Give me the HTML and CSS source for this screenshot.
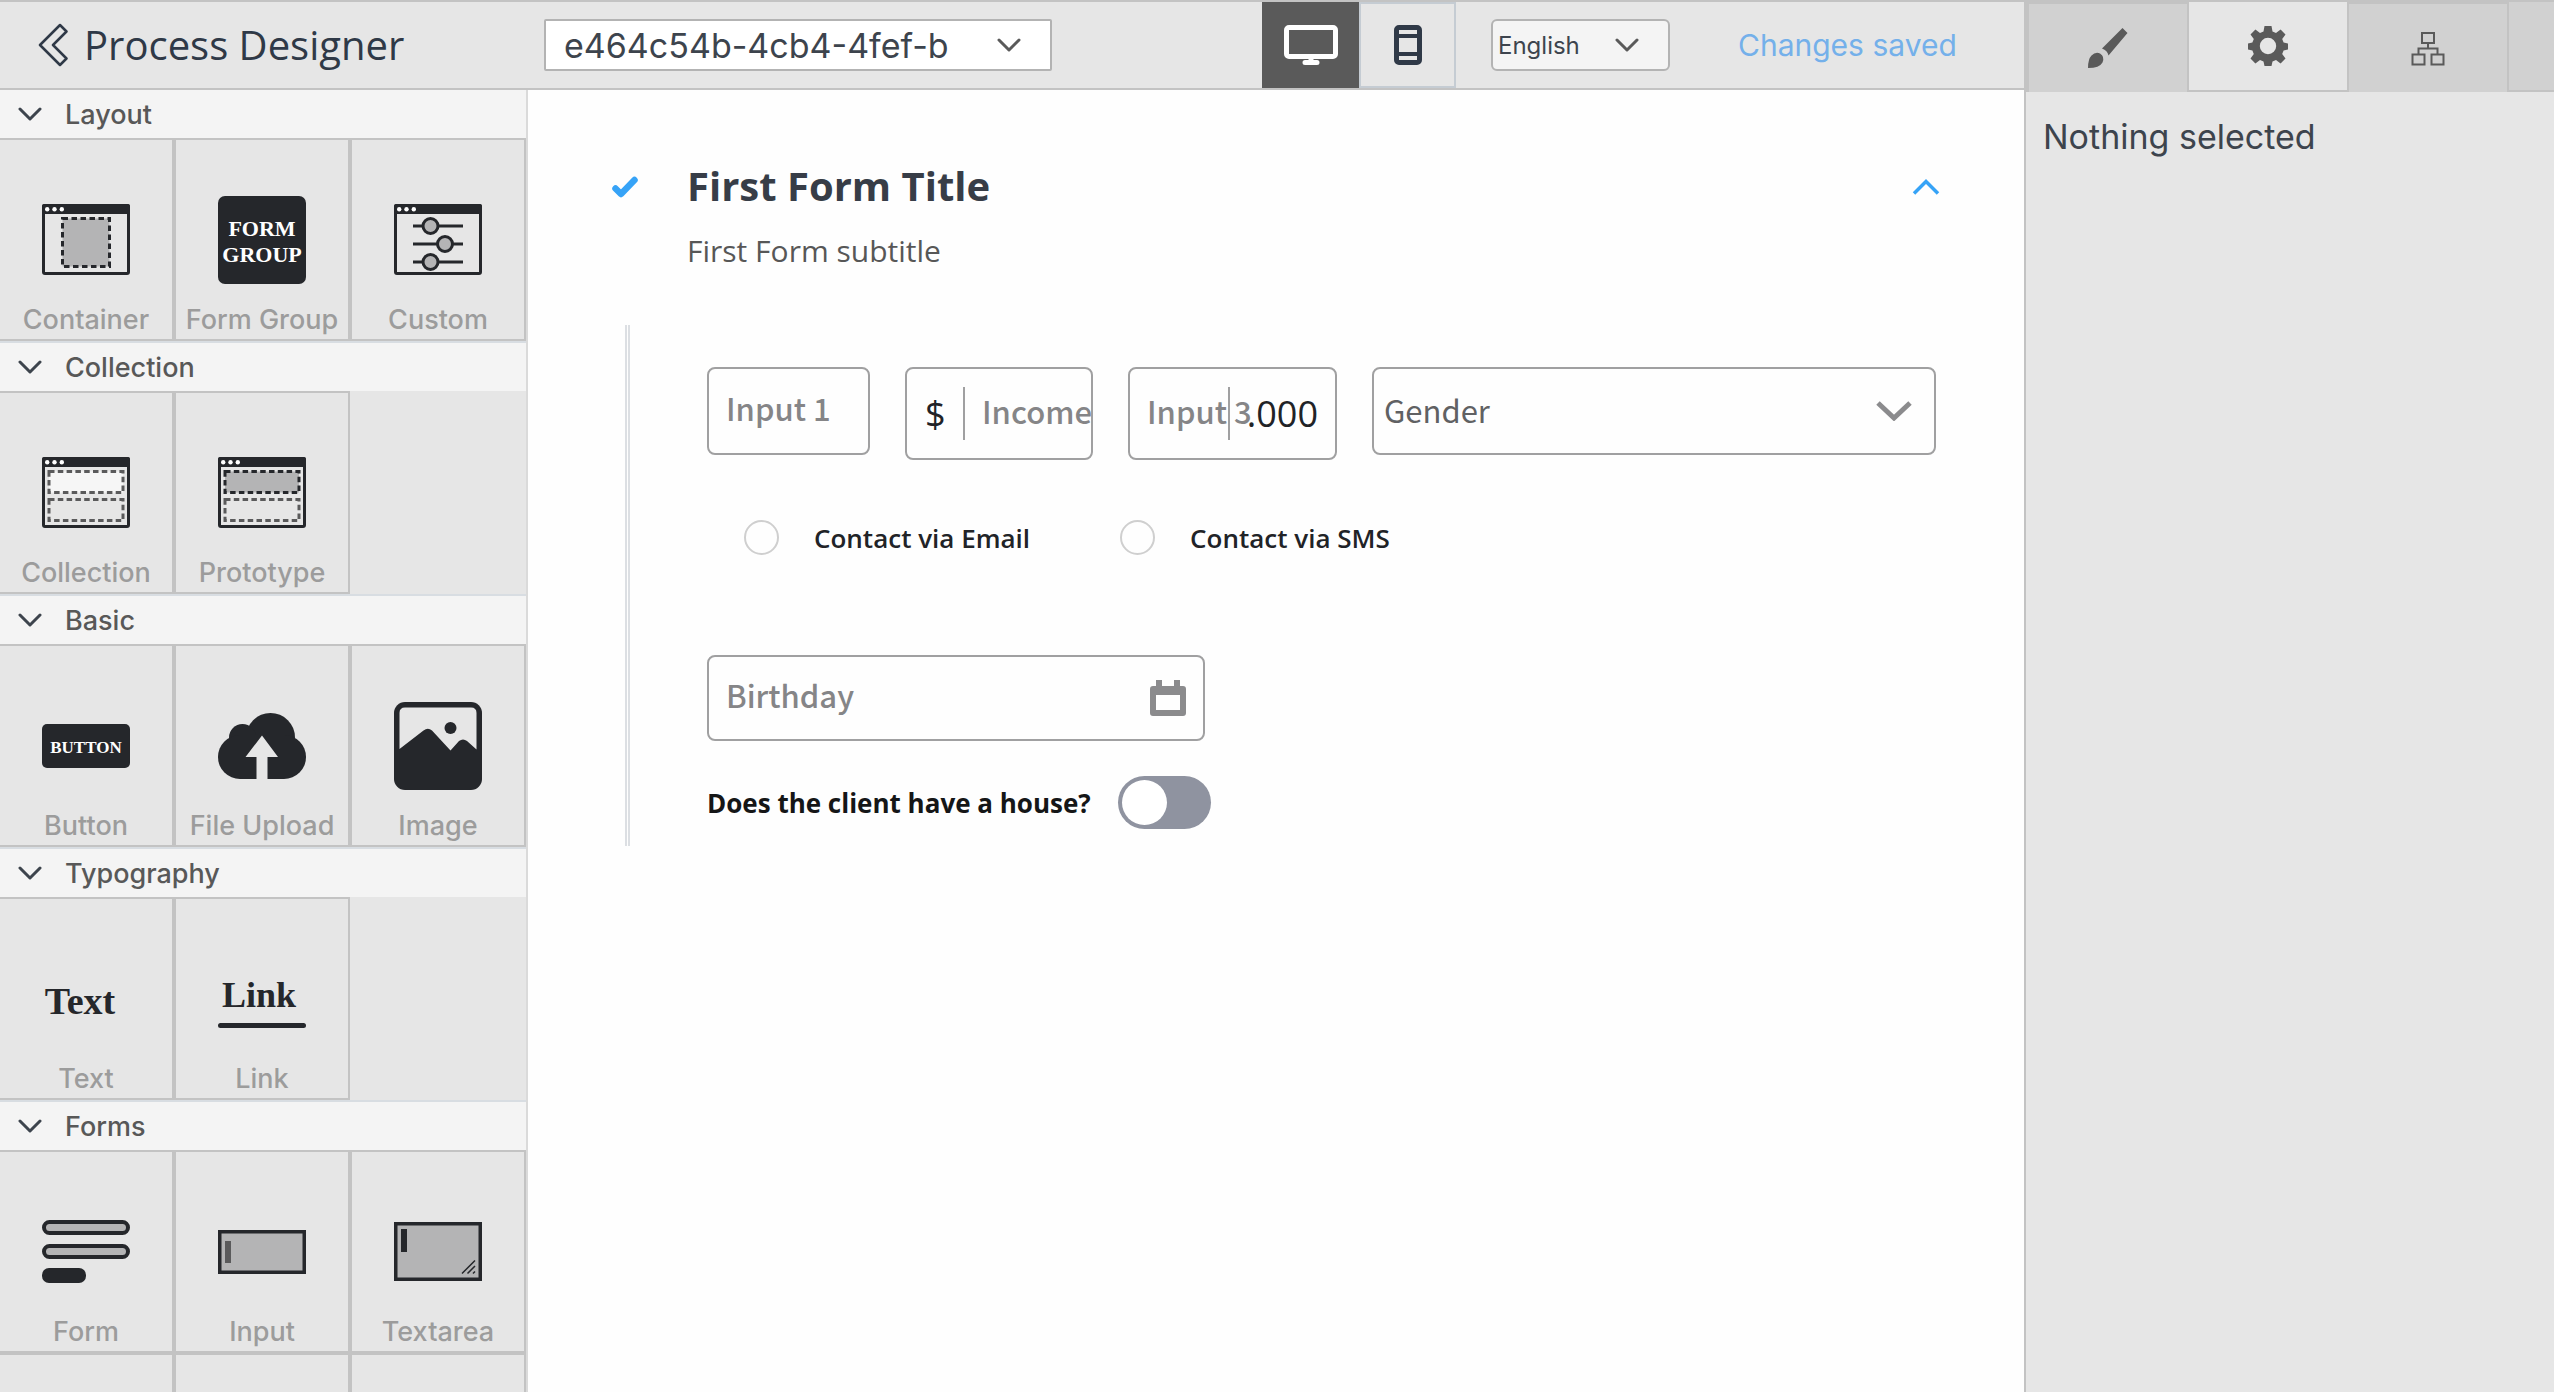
FILE: index.html
```html
<!DOCTYPE html>
<html lang="en">
<head>
<meta charset="utf-8">
<title>Process Designer</title>
<link rel="stylesheet" href="styles.css">
</head>
<body>
<svg class="sprite" aria-hidden="true">
  <symbol id="chevron" viewBox="0 0 24 14"><path d="M2 2l10 10L22 2" fill="none" stroke="currentColor" stroke-width="3" stroke-linecap="round" stroke-linejoin="round"/></symbol>
  <symbol id="window" viewBox="0 0 88 88">
    <rect x="1.5" y="9.5" width="85" height="68" rx="1.5" fill="none" stroke="#25272b" stroke-width="3"/>
    <path d="M0 18V10q0-2 2-2h84q2 0 2 2v8z" fill="#25272b"/>
    <g fill="#fff"><circle cx="5.2" cy="13.2" r="2.2"/><circle cx="12.5" cy="13.2" r="2.2"/><circle cx="19.8" cy="13.2" r="2.2"/></g>
  </symbol>
</svg>
<div class="app">
  <header class="topbar">
    <a class="brand" href="#">
      <svg class="brand-icon" viewBox="0 0 30 44"><path d="M2 22L22 2l6.500 6.500L15 22l13.500 13.500L22 42z" fill="none" stroke="currentColor" stroke-width="2.500" stroke-linejoin="round"/></svg>
      <h1 class="brand-name">Process Designer</h1>
    </a>
    <div class="picker picker-process">
      <select class="picker-select" aria-label="Process"><option>e464c54b-4cb4-4fef-b</option></select>
      <svg class="picker-icon"><use href="#chevron"/></svg>
    </div>
    <div class="devices">
      <button class="device device-active" type="button" aria-label="Desktop">
        <svg class="device-icon device-icon-wide" viewBox="0 0 54 40"><rect x="2.500" y="2.500" width="49" height="29" rx="2.500" fill="none" stroke="currentColor" stroke-width="5"/><path d="M27 33v4M21 37.500h12" fill="none" stroke="currentColor" stroke-width="5" stroke-linecap="round"/></svg>
      </button>
      <button class="device" type="button" aria-label="Mobile">
        <svg class="device-icon" viewBox="0 0 28 40"><rect x="2.500" y="2.500" width="23" height="35" rx="2.500" fill="none" stroke="currentColor" stroke-width="5"/><path d="M3 11h22M3 29h22" stroke="currentColor" stroke-width="4"/></svg>
      </button>
    </div>
    <div class="picker picker-language">
      <select class="picker-select" aria-label="Language"><option>English</option></select>
      <svg class="picker-icon"><use href="#chevron"/></svg>
    </div>
    <p class="status">Changes saved</p>
  </header>

  <nav class="palette" aria-label="Components">
    <section class="group">
      <button class="group-head" type="button"><svg class="group-icon"><use href="#chevron"/></svg>Layout</button>
      <div class="tiles">
        <button class="tile" type="button">
          <svg class="tile-icon" viewBox="0 0 88 88"><use href="#window"/><rect x="20.500" y="22.500" width="47" height="48" fill="#b4b4b5" stroke="#25272b" stroke-width="3" stroke-dasharray="5.500 3.500"/></svg>
          <span class="tile-label">Container</span>
        </button>
        <button class="tile" type="button">
          <svg class="tile-icon" viewBox="0 0 88 88"><rect width="88" height="88" rx="7" fill="#25272b"/><text class="glyph glyph-light" x="44" y="40" font-size="22">FORM</text><text class="glyph glyph-light" x="44" y="66" font-size="22">GROUP</text></svg>
          <span class="tile-label">Form Group</span>
        </button>
        <button class="tile" type="button">
          <svg class="tile-icon" viewBox="0 0 88 88"><use href="#window"/><g fill="#b4b4b5" stroke="#25272b" stroke-width="3"><path d="M19 30h50M19 48h50M19 66h50"/><circle cx="36.500" cy="30" r="7.500"/><circle cx="51" cy="48" r="7.500"/><circle cx="36.500" cy="66" r="7.500"/></g></svg>
          <span class="tile-label">Custom</span>
        </button>
      </div>
    </section>

    <section class="group">
      <button class="group-head" type="button"><svg class="group-icon"><use href="#chevron"/></svg>Collection</button>
      <div class="tiles">
        <button class="tile" type="button">
          <svg class="tile-icon" viewBox="0 0 88 88"><use href="#window"/><g stroke="#5a5a5b" stroke-width="3" stroke-dasharray="5.500 3.300"><rect x="7" y="22.500" width="74" height="21" fill="#f6f6f6"/><rect x="7" y="50.500" width="74" height="21" fill="none"/></g></svg>
          <span class="tile-label">Collection</span>
        </button>
        <button class="tile" type="button">
          <svg class="tile-icon" viewBox="0 0 88 88"><use href="#window"/><g stroke-width="3" stroke-dasharray="5.500 3.300"><rect x="7" y="22.500" width="74" height="21" fill="#b4b4b5" stroke="#25272b"/><rect x="7" y="50.500" width="74" height="21" fill="none" stroke="#5a5a5b"/></g></svg>
          <span class="tile-label">Prototype</span>
        </button>
      </div>
    </section>

    <section class="group">
      <button class="group-head" type="button"><svg class="group-icon"><use href="#chevron"/></svg>Basic</button>
      <div class="tiles">
        <button class="tile" type="button">
          <svg class="tile-icon" viewBox="0 0 88 88"><rect y="22" width="88" height="44" rx="5" fill="#25272b"/><text class="glyph glyph-light" x="44" y="51" font-size="17">BUTTON</text></svg>
          <span class="tile-label">Button</span>
        </button>
        <button class="tile" type="button">
          <svg class="tile-icon" viewBox="0 0 88 88"><g fill="#25272b"><circle cx="52.500" cy="35.500" r="24.500"/><circle cx="24.500" cy="35.500" r="13.500"/><circle cx="22" cy="55" r="22"/><circle cx="66" cy="55" r="22"/><path d="M22 33h44v44H22z"/></g><path d="M44 33.500L60 55H49.500V78h-11V55H27.500z" fill="#e6e6e6"/></svg>
          <span class="tile-label">File Upload</span>
        </button>
        <button class="tile" type="button">
          <svg class="tile-icon" viewBox="0 0 88 88"><rect width="88" height="88" rx="11" fill="#25272b"/><path d="M5.500 47V11q0-5.500 5.500-5.500h66q5.500 0 5.500 5.500v36.500L73 39q-4-3-8 0l-8.500 9.500L38 28.500q-4-3.500-8.500 0z" fill="#e6e6e6"/><circle cx="56.500" cy="26" r="6" fill="#25272b"/></svg>
          <span class="tile-label">Image</span>
        </button>
      </div>
    </section>

    <section class="group">
      <button class="group-head" type="button"><svg class="group-icon"><use href="#chevron"/></svg>Typography</button>
      <div class="tiles">
        <button class="tile" type="button">
          <svg class="tile-icon" viewBox="0 0 88 88"><text class="glyph" x="38" y="59" font-size="38">Text</text></svg>
          <span class="tile-label">Text</span>
        </button>
        <button class="tile" type="button">
          <svg class="tile-icon" viewBox="0 0 88 88"><text class="glyph" x="41" y="52" font-size="36">Link</text><rect y="68" width="88" height="5" rx="2.500" fill="#25272b"/></svg>
          <span class="tile-label">Link</span>
        </button>
      </div>
    </section>

    <section class="group">
      <button class="group-head" type="button"><svg class="group-icon"><use href="#chevron"/></svg>Forms</button>
      <div class="tiles">
        <button class="tile" type="button">
          <svg class="tile-icon" viewBox="0 0 88 88"><g fill="#b4b4b5" stroke="#25272b" stroke-width="4"><rect x="2" y="14" width="84" height="11" rx="5.500"/><rect x="2" y="38" width="84" height="11" rx="5.500"/></g><rect y="60" width="44" height="15" rx="7" fill="#25272b"/></svg>
          <span class="tile-label">Form</span>
        </button>
        <button class="tile" type="button">
          <svg class="tile-icon" viewBox="0 0 88 88"><rect x="1.750" y="23.750" width="84.500" height="40.500" fill="#b4b4b5" stroke="#25272b" stroke-width="3.500"/><path d="M7 33h6v22H7z" fill="#5a5a5b"/></svg>
          <span class="tile-label">Input</span>
        </button>
        <button class="tile" type="button">
          <svg class="tile-icon" viewBox="0 0 88 88"><rect x="1.750" y="15.750" width="84.500" height="55.500" fill="#b4b4b5" stroke="#25272b" stroke-width="3.500"/><path d="M7 21h6v23H7z" fill="#25272b"/><path d="M68 65.500L81 52.500M73.500 65.500l7.500-7.500M79 65.500l2-2" stroke="#25272b" stroke-width="1.500"/></svg>
          <span class="tile-label">Textarea</span>
        </button>
        <div class="tile"></div>
        <div class="tile"></div>
        <div class="tile"></div>
      </div>
    </section>
  </nav>

  <main class="canvas">
    <header class="form-head">
      <svg class="form-check" viewBox="0 0 26 22"><path d="M3.500 12.500l5.500 5.500L22.500 4" fill="none" stroke="currentColor" stroke-width="6.500" stroke-linecap="round" stroke-linejoin="round"/></svg>
      <h2 class="form-title">First Form Title</h2>
      <button class="form-toggle" type="button" aria-label="Collapse"><svg class="form-caret" viewBox="0 0 28 16"><path d="M2 14.500L14 2.500l12 12" fill="none" stroke="currentColor" stroke-width="3.500"/></svg></button>
    </header>
    <p class="form-subtitle">First Form subtitle</p>

    <form class="form-body">
      <div class="fields">
        <input class="box field-text" type="text" placeholder="Input 1" aria-label="Input 1">
        <div class="box box-affix">
          <span class="prefix">$</span>
          <input class="field-text field-prefixed" type="text" placeholder="Income" aria-label="Income">
        </div>
        <div class="box box-affix">
          <input class="field-text" type="text" placeholder="Input 3" aria-label="Input 3">
          <span class="suffix">.000</span>
        </div>
        <div class="choice">
          <select class="box choice-select" aria-label="Gender"><option>Gender</option></select>
          <svg class="choice-icon" viewBox="0 0 36 20"><path d="M2 2l16 15L34 2" fill="none" stroke="currentColor" stroke-width="5"/></svg>
        </div>
      </div>

      <div class="radios">
        <label class="radio"><input class="radio-dot" type="radio" name="contact">Contact via Email</label>
        <label class="radio"><input class="radio-dot" type="radio" name="contact">Contact via SMS</label>
      </div>

      <div class="box date">
        <input class="field-text" type="text" placeholder="Birthday" aria-label="Birthday">
        <svg class="date-icon" viewBox="0 0 36 36"><path fill-rule="evenodd" fill="currentColor" d="M6 0h6v6h12V0h6v6h3q3 0 3 3v24q0 3-3 3H3q-3 0-3-3V9q0-3 3-3h3zM6 15v15h24V15z"/></svg>
      </div>

      <label class="switch-row">Does the client have a house?<input class="switch" type="checkbox" role="switch"></label>
    </form>
  </main>

  <aside class="inspector">
    <div class="tabs">
      <button class="tab" type="button" aria-label="Styles"><svg class="tab-icon" viewBox="0 0 40 40"><path fill="currentColor" d="M34.500 0L39.500 5 20.500 27.500q-1-5-6.500-7zM0 40q0-9 3.500-12.500 4-4 8.500-2 5 3 2.500 9Q11.500 40 0 40z"/></svg></button>
      <button class="tab tab-active" type="button" aria-label="Settings"><svg class="tab-icon" viewBox="0 0 40 40"><path fill="currentColor" fill-rule="evenodd" d="M16.500 0h7l1 5.500 3.500 1.400 4.600-3.300 4.900 4.900-3.300 4.600 1.400 3.500 4.400 1v5.800l-4.400 1-1.400 3.500 3.300 4.600-4.900 4.900-4.600-3.300-3.500 1.400-1 4.500h-7l-1-4.500-3.500-1.400-4.600 3.300-4.900-4.900 3.300-4.600L4.400 24.400 0 23.400v-5.800l4.400-1 1.400-3.500L2.500 8.500l4.900-4.900L12 6.900l3.500-1.400zM20 11.800a8.200 8.200 0 1 0 0 16.400 8.200 8.200 0 0 0 0-16.400z"/></svg></button>
      <button class="tab" type="button" aria-label="Structure"><svg class="tab-icon" viewBox="0 0 40 40"><path fill="none" stroke="currentColor" stroke-width="2" d="M14 5h12v10H14zM4.500 26.500h12v10h-12zM23.500 26.500h12v10h-12zM20 15v5.500M10.500 26.500v-6h19v6"/></svg></button>
      <span class="tabs-rest"></span>
    </div>
    <p class="empty">Nothing selected</p>
  </aside>
</div>
</body>
</html>
```
FILE: styles.css
```css
* {
  box-sizing: border-box;
}

body {
  margin: 0;
  font-family: Inter, "Liberation Sans", sans-serif;
  color: #3d444d;
}

button,
input,
select {
  margin: 0;
  padding: 0;
  border: 0;
  border-radius: 0;
  background: none;
  color: inherit;
  font: inherit;
  appearance: none;
}

h1,
h2,
p {
  margin: 0;
}

svg {
  display: block;
  flex: none;
}

.sprite {
  position: absolute;
  width: 0;
  height: 0;
}

.app {
  display: grid;
  grid-template: 90px minmax(0, 1fr) / 528px minmax(0, 1fr) 530px;
  height: 100vh;
  overflow: hidden;
}

/* Top bar */

.topbar {
  grid-column: 1 / 3;
  display: flex;
  align-items: center;
  border: solid #c3c3c3;
  border-width: 2px 0;
  background: #e6e6e6;
}

.brand {
  display: flex;
  align-items: center;
  gap: 16px;
  width: 544px;
  padding-left: 38px;
  color: #2f3947;
  text-decoration: none;
}

.brand-icon {
  width: 30px;
  height: 44px;
}

.brand-name {
  font: 400 40px/54px "Open Sans", "Noto Sans", sans-serif;
}

.picker {
  position: relative;
}

.picker-select {
  width: 100%;
  height: 52px;
  border: 2px solid #b3b3b3;
}

.picker-icon {
  position: absolute;
  top: 19px;
  right: 31px;
  width: 24px;
  height: 14px;
  color: #5a5a5a;
  pointer-events: none;
}

.picker-process {
  width: 508px;
}

.picker-process .picker-select {
  padding-left: 18px;
  border-radius: 2px;
  background: #fff;
  font-size: 34px;
}

.picker-language {
  width: 179px;
  margin-left: 35px;
}

.picker-language .picker-select {
  padding-left: 5px;
  border-radius: 6px;
  background: #f4f4f4;
  font-size: 24px;
}

.devices {
  display: flex;
  align-self: stretch;
  margin-left: 210px;
}

.device {
  display: grid;
  place-items: center;
  width: 97px;
  border: 2px solid #c5ccd3;
  color: #2f3947;
}

.device-active {
  border-color: #5a5a5a;
  background: #5a5a5a;
  color: #fff;
}

.device-icon {
  width: 28px;
  height: 40px;
}

.device-icon-wide {
  width: 54px;
}

.status {
  margin-left: 68px;
  color: #74b0ea;
  font-size: 30px;
}

/* Component palette */

.palette {
  grid-row: 2;
  overflow: hidden;
  border-right: 2px solid #dadada;
  background: #e6e6e6;
}

.group {
  border-bottom: 2px solid #d8dde2;
}

.group-head {
  display: flex;
  align-items: center;
  gap: 23px;
  width: 100%;
  height: 48px;
  padding-left: 18px;
  background: #f4f4f4;
  color: #585858;
  font-size: 27px;
  font-weight: 500;
}

.group-icon {
  width: 24px;
  height: 14px;
  color: #3d444d;
}

.tiles {
  display: grid;
  grid-template-columns: repeat(3, 176px);
  margin-left: -2px;
}

.tile {
  display: flex;
  flex-direction: column;
  align-items: center;
  height: 203px;
  padding-top: 56px;
  border: 2px solid #c3c3c3;
  color: #9c9c9c;
  font-size: 27px;
  font-weight: 500;
  white-space: nowrap;
}

.tile-icon {
  width: 88px;
  height: 88px;
}

.tile-label {
  margin-top: 20px;
  line-height: 32px;
}

.glyph {
  fill: #25272b;
  font-family: "Liberation Serif", serif;
  font-weight: 700;
  text-anchor: middle;
}

.glyph-light {
  fill: #fff;
}

/* Canvas */

.canvas {
  grid-area: 2 / 2;
  padding: 69px 84px 0;
  background: #fefefe;
  font-family: "Open Sans", "Noto Sans", sans-serif;
}

.form-head {
  display: flex;
  align-items: center;
}

.form-check {
  width: 26px;
  height: 22px;
  color: #36a3f7;
}

.form-title {
  flex: 1;
  margin-left: 49px;
  color: #373d47;
  font-size: 40px;
  line-height: 54px;
}

.form-toggle,
.form-check {
  margin-top: 2px;
}

.form-toggle {
  color: #36a3f7;
}

.form-caret {
  width: 28px;
  height: 16px;
}

.form-subtitle {
  margin: 18px 0 54px 75px;
  color: #575757;
  font-size: 30px;
  line-height: 40px;
}

.form-body {
  margin: 0 4px 0 13px;
  padding: 42px 0 17px 77px;
  border-left: 5px double #dcdfe3;
  color: #212327;
}

.fields {
  display: grid;
  grid-template-columns: 163fr 188fr 209fr 564fr;
  align-items: start;
  gap: 35px;
}

.box {
  height: 88px;
  border: 2px solid #a0a0a1;
  border-radius: 8px;
}

.field-text {
  width: 100%;
  min-width: 0;
  padding: 0 17px 7px;
  font-family: "Noto Sans CJK SC", sans-serif;
  font-size: 31px;
  font-weight: 500;
}

.field-text::placeholder {
  color: #858587;
  opacity: 1;
}

.box-affix {
  position: relative;
  display: flex;
  align-items: center;
  height: 93px;
  overflow: hidden;
  font-size: 36px;
}

.prefix {
  flex: none;
  width: 58px;
  padding-left: 18px;
  border-right: 2px solid #a0a0a1;
  line-height: 53px;
}

.field-prefixed {
  padding-right: 0;
}

.suffix {
  position: absolute;
  top: 18px;
  right: 0;
  width: 107px;
  padding-right: 17px;
  border-left: 2px solid #a0a0a1;
  line-height: 53px;
  text-align: right;
}

.choice {
  position: relative;
}

.choice-select {
  display: block;
  width: 100%;
  padding: 0 0 4px 10px;
  color: #606163;
  font-family: "Noto Sans CJK SC", sans-serif;
  font-size: 31px;
}

.choice-icon {
  position: absolute;
  top: 34px;
  right: 24px;
  width: 36px;
  height: 20px;
  color: #8b8b8d;
  pointer-events: none;
}

.radios {
  display: flex;
  gap: 90px;
  margin: 60px 0 100px 37px;
}

.radio {
  display: flex;
  align-items: center;
  gap: 35px;
  height: 35px;
  font-size: 26px;
  font-weight: 600;
  line-height: 34px;
}

.radio-dot {
  width: 35px;
  height: 35px;
  border: 2px solid #cfcfcf;
  border-radius: 50%;
}

.date {
  display: flex;
  align-items: center;
  width: 498px;
  height: 86px;
}

.date-icon {
  width: 36px;
  height: 36px;
  margin-right: 17px;
  color: #8b8b8d;
}

.switch-row {
  display: flex;
  align-items: center;
  gap: 27px;
  margin-top: 35px;
  color: #151617;
  font-size: 26px;
  font-weight: 700;
}

.switch {
  width: 93px;
  height: 53px;
  padding: 4px;
  border-radius: 27px;
  background: #8f93a0;
}

.switch::before {
  content: "";
  display: block;
  width: 45px;
  height: 45px;
  border-radius: 50%;
  background: #fff;
}

/* Inspector */

.inspector {
  grid-area: 1 / 3 / 3;
  border-top: 2px solid #c3c3c3;
  border-left: 2px solid #c3c3c3;
  background: #e6e6e6;
}

.tabs {
  display: flex;
  height: 90px;
  padding-left: 1px;
  background: #c3c3c3;
}

.tab {
  display: grid;
  place-items: center;
  width: 160px;
  border: solid #c3c3c3;
  border-width: 2px 0 0 2px;
  background: #d1d1d1;
  color: #5a5a5a;
}

.tab-active {
  border-width: 0 0 2px 2px;
  background: #e6e6e6;
}

.tab-icon {
  width: 40px;
  height: 40px;
}

.tabs-rest {
  flex: 1;
  border: solid #c3c3c3;
  border-width: 0 0 2px 2px;
  background: #d1d1d1;
}

.empty {
  padding: 24px 17px;
  font-size: 34px;
  line-height: 42px;
}
```
